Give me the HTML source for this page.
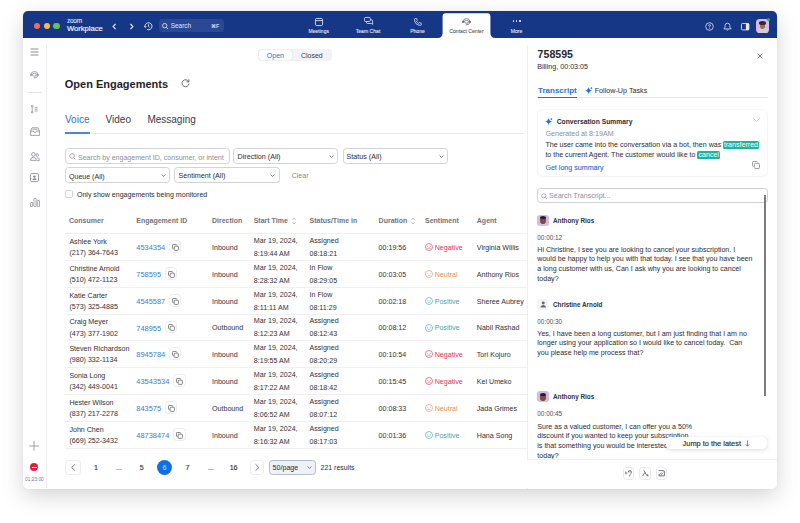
<!DOCTYPE html>
<html><head><meta charset="utf-8">
<style>
*{box-sizing:border-box;margin:0;padding:0}
html,body{width:800px;height:523px;overflow:hidden;background:#fff}
body{position:relative;font-family:"Liberation Sans",sans-serif;color:#242432}
.a{position:absolute}
.t{position:absolute;white-space:nowrap;line-height:1}
#win{position:absolute;left:23px;top:11.1px;width:754px;height:477.6px;border-radius:5px;background:#fff;box-shadow:0 7px 22px rgba(0,0,0,0.17),0 0 1.5px rgba(0,0,0,0.1);overflow:hidden}
#hdr{position:absolute;left:0;top:0;width:754px;height:26.9px;background:#163686}
.nav{position:absolute;color:#e6ebf7;font-size:5.1px;-webkit-text-stroke:0.08px currentColor;text-align:center;line-height:1}
svg{position:absolute;overflow:visible}
.th{font-size:7px;font-weight:700;color:#72727a}
.td{font-size:7.1px;color:#303038}
.id{color:#3b7de0;font-size:7.45px}
.cp{display:inline-block;position:relative;width:12px;height:0;margin-left:3.8px}
.cpb{position:absolute;left:-0.2px;top:-10.1px;width:12.5px;height:12.4px;border:0.8px solid #ececf0;border-radius:3.5px}
.box{position:absolute;border:0.8px solid #d3d3d9;border-radius:3.5px;background:#fff}
.chev{position:absolute}
.pg{font-size:7.1px;color:#2b2b35;text-align:center;-webkit-text-stroke:0.12px #2b2b35}
.msg{font-size:7.1px;color:#2b2b35}
.nm{font-size:6.35px;font-weight:700;color:#30303a}
.tm{font-size:6.4px;color:#4c4c56}


</style></head><body>
<div id="win">
  <div id="hdr"></div>
</div>

<!-- traffic lights -->
<div class="a" style="left:34px;top:23px;width:6.4px;height:6.4px;border-radius:50%;background:#ee6a5e"></div>
<div class="a" style="left:43.8px;top:23px;width:6.4px;height:6.4px;border-radius:50%;background:#f5bd4f"></div>
<div class="a" style="left:53.4px;top:23px;width:6.4px;height:6.4px;border-radius:50%;background:#61c454"></div>

<!-- logo -->
<div class="t" style="left:66.9px;top:17.9px;font-size:6.6px;letter-spacing:-0.25px;color:#dfe5f5;-webkit-text-stroke:0.1px #dfe5f5">zoom</div>
<div class="t" style="left:66.9px;top:24.8px;font-size:7.65px;color:#eef1fa;-webkit-text-stroke:0.18px #eef1fa">Workplace</div>
<!-- back / forward -->
<svg style="left:111.8px;top:22.8px" width="5" height="7" viewBox="0 0 5 7"><path d="M3.6 0.9 L1.1 3.5 L3.6 6.1" fill="none" stroke="#e6ebf7" stroke-width="1.1"/></svg>
<svg style="left:128.6px;top:22.8px" width="5" height="7" viewBox="0 0 5 7"><path d="M1.4 0.9 L3.9 3.5 L1.4 6.1" fill="none" stroke="#e6ebf7" stroke-width="1.1"/></svg>
<!-- history -->
<svg style="left:143.7px;top:21.9px" width="9" height="8.5" viewBox="0 0 9 8.5"><path d="M1.12 5.16 A3.5 3.5 0 1 1 3.02 7.42" fill="none" stroke="#e6ebf7" stroke-width="0.9"/><path d="M0.3 3.9 L1.1 5.3 L2.5 4.7" fill="none" stroke="#e6ebf7" stroke-width="0.8"/><path d="M4.5 2.3 V4.5 L5.6 5.3" fill="none" stroke="#e6ebf7" stroke-width="0.85"/></svg>
<!-- search -->
<div class="a" style="left:159px;top:19px;width:65.3px;height:13.2px;border-radius:3.5px;background:#2b4894"></div>
<svg style="left:161.8px;top:22.9px" width="6.5" height="6.5" viewBox="0 0 6.5 6.5"><circle cx="2.7" cy="2.7" r="2.2" fill="none" stroke="#e0e6f5" stroke-width="0.85"/><path d="M4.3 4.3 L6 6" stroke="#e0e6f5" stroke-width="0.85"/></svg>
<div class="t" style="left:170.8px;top:23.1px;font-size:6.4px;color:#e0e6f5">Search</div>
<div class="t" style="left:211px;top:23.8px;font-size:5.4px;font-weight:700;color:#c9d2ea">&#8984;F</div>

<!-- nav -->
<svg style="left:315px;top:18px" width="8" height="8" viewBox="0 0 8 8"><rect x="0.45" y="0.45" width="7.1" height="7.1" rx="1.3" fill="none" stroke="#e6ebf7" stroke-width="0.85"/><path d="M0.5 2.6 H7.5" stroke="#e6ebf7" stroke-width="0.85"/></svg>
<div class="nav" style="left:298.75px;top:29.2px;width:40px">Meetings</div>
<svg style="left:363.5px;top:17px" width="9.5" height="8" viewBox="0 0 9.5 8"><path d="M1.5 0.45 H5.1 Q6.4 0.45 6.4 1.7 V3.3 Q6.4 4.5 5.1 4.5 H1.5 Q0.45 4.5 0.45 3.3 V1.7 Q0.45 0.45 1.5 0.45Z" fill="none" stroke="#e6ebf7" stroke-width="0.8"/><path d="M6.4 2.8 H7.4 Q8.6 2.8 8.6 4 V7.4 L7.3 6.5 H3.6 Q2.4 6.5 2.4 5.3 V4.5" fill="none" stroke="#e6ebf7" stroke-width="0.8"/></svg>
<div class="nav" style="left:348px;top:29.2px;width:40px">Team Chat</div>
<svg style="left:413.7px;top:17.6px" width="8" height="8" viewBox="0 0 8 8"><path d="M1.2 0.6 L2.6 0.6 L3.4 2.4 L2.5 3.2 Q3.2 4.7 4.7 5.4 L5.5 4.5 L7.3 5.3 L7.3 6.7 Q7.3 7.4 6.5 7.4 Q0.6 7 0.5 1.3 Q0.5 0.6 1.2 0.6Z" fill="none" stroke="#e6ebf7" stroke-width="0.8"/></svg>
<div class="nav" style="left:397.5px;top:29.2px;width:40px">Phone</div>
<!-- contact center tab -->
<svg style="left:437px;top:13.4px" width="60" height="24.8" viewBox="0 0 60 24.5"><path d="M0.5 24.8 Q5.6 24.8 5.6 19.8 V3 Q5.6 0 8.6 0 H50.4 Q53.4 0 53.4 3 V19.8 Q53.4 24.8 58.5 24.8 Z" fill="#fff"/></svg>
<svg style="left:462.2px;top:17.5px" width="9" height="7.4" viewBox="0 0 9 7.4"><path d="M1.3 3.6 Q1.3 0.5 4.5 0.5 Q7.7 0.5 7.7 3.6" fill="none" stroke="#5a5a62" stroke-width="0.7"/><rect x="0.3" y="2.7" width="1.5" height="2.4" rx="0.7" fill="#5a5a62"/><rect x="7.2" y="2.7" width="1.5" height="2.4" rx="0.7" fill="#5a5a62"/><ellipse cx="4.5" cy="3.8" rx="2.1" ry="1.45" fill="none" stroke="#5a5a62" stroke-width="0.7"/><path d="M7.6 4.9 Q7.2 6.8 4.6 6.8" fill="none" stroke="#5a5a62" stroke-width="0.7"/><circle cx="4.4" cy="6.8" r="0.55" fill="#5a5a62"/></svg>
<div class="nav" style="left:446.5px;top:29.2px;width:40px;color:#555">Contact Center</div>
<div class="a" style="left:512.6px;top:20.4px;width:1.3px;height:1.3px;border-radius:50%;background:#e6ebf7"></div>
<div class="a" style="left:516px;top:20.4px;width:1.3px;height:1.3px;border-radius:50%;background:#e6ebf7"></div>
<div class="a" style="left:519.4px;top:20.4px;width:1.3px;height:1.3px;border-radius:50%;background:#e6ebf7"></div>
<div class="nav" style="left:496.6px;top:29.2px;width:40px">More</div>

<!-- right icons -->
<svg style="left:704.5px;top:21.6px" width="9" height="9" viewBox="0 0 9 9"><circle cx="4.5" cy="4.5" r="3.8" fill="none" stroke="#e6ebf7" stroke-width="0.75"/><path d="M3.5 3.7 Q3.5 2.7 4.5 2.7 Q5.5 2.7 5.5 3.6 Q5.5 4.2 4.6 4.6 V5.2" fill="none" stroke="#e6ebf7" stroke-width="0.8"/><circle cx="4.6" cy="6.3" r="0.5" fill="#e6ebf7"/></svg>
<svg style="left:722.6px;top:21.6px" width="9" height="9" viewBox="0 0 9 9"><path d="M0.8 6.9 Q2.1 6 2.1 4.6 V3.6 A2.4 2.4 0 0 1 6.9 3.6 V4.6 Q6.9 6 8.2 6.9 Z" fill="none" stroke="#e6ebf7" stroke-width="0.8" stroke-linejoin="round"/><path d="M3.6 7.7 Q4.5 8.6 5.4 7.7" fill="none" stroke="#e6ebf7" stroke-width="0.75"/></svg>
<svg style="left:741px;top:22.6px" width="8.4" height="7.4" viewBox="0 0 8.4 7.4"><rect x="0.45" y="0.45" width="7.5" height="6.5" rx="1.1" fill="none" stroke="#e6ebf7" stroke-width="0.9"/><rect x="4.9" y="0.45" width="3.05" height="6.5" fill="#e6ebf7"/></svg>
<div class="a" style="left:755.8px;top:19.3px;width:13.6px;height:13.5px;border-radius:3.5px;background:#d9b8ef;overflow:hidden">
<div class="a" style="left:2.6px;top:9.2px;width:9.5px;height:7px;border-radius:45%;background:#d4cdd8"></div>
<div class="a" style="left:4.2px;top:3.6px;width:5.4px;height:6.6px;border-radius:45%;background:#9c6a52"></div>
<div class="a" style="left:3.4px;top:2.2px;width:6.6px;height:3.8px;border-radius:50% 50% 30% 30%;background:#3a2620"></div>
</div>
<div class="a" style="left:766.7px;top:17.5px;width:3.8px;height:3.8px;border-radius:50%;background:#22b35a"></div>
<!-- sidebar -->
<div class="a" style="left:46px;top:44.4px;width:1px;height:444px;background:#efeff2"></div>
<svg style="left:30px;top:47.5px" width="9" height="8" viewBox="0 0 9 8"><path d="M0.5 1 H8.5 M0.5 4 H8.5 M0.5 7 H8.5" stroke="#84848c" stroke-width="0.9"/></svg>
<svg style="left:29.9px;top:70.8px" width="9" height="7.4" viewBox="0 0 9 7.4"><path d="M1.3 3.6 Q1.3 0.5 4.5 0.5 Q7.7 0.5 7.7 3.6" fill="none" stroke="#8c8c94" stroke-width="0.8"/><rect x="0.3" y="2.7" width="1.5" height="2.4" rx="0.7" fill="#8c8c94"/><rect x="7.2" y="2.7" width="1.5" height="2.4" rx="0.7" fill="#8c8c94"/><ellipse cx="4.5" cy="3.8" rx="2.1" ry="1.45" fill="none" stroke="#8c8c94" stroke-width="0.8"/><path d="M7.6 4.9 Q7.2 6.8 4.6 6.8" fill="none" stroke="#8c8c94" stroke-width="0.8"/><circle cx="4.4" cy="6.8" r="0.55" fill="#8c8c94"/></svg>
<div class="a" style="left:27px;top:91.5px;width:15px;height:1px;background:#e6e6ea"></div>
<svg style="left:30px;top:104.8px" width="9" height="8.5" viewBox="0 0 9 8.5"><circle cx="2.2" cy="1.2" r="0.85" fill="none" stroke="#84848c" stroke-width="0.75"/><circle cx="2.2" cy="7.2" r="0.85" fill="none" stroke="#84848c" stroke-width="0.75"/><path d="M2.2 2 V6.4 M4.6 2.4 H7.6 M4.6 4.2 H7.6 M4.6 6 H7.6" fill="none" stroke="#84848c" stroke-width="0.7"/></svg>
<svg style="left:29.5px;top:127px" width="10" height="9" viewBox="0 0 10 9"><path d="M0.6 4 H3.3 Q3.6 5.4 5 5.4 Q6.4 5.4 6.7 4 H9.4 V8.4 H0.6Z" fill="none" stroke="#84848c" stroke-width="0.75"/><path d="M0.6 4 L2 0.8 H8 L9.4 4" fill="none" stroke="#84848c" stroke-width="0.75"/><path d="M2.6 2.3 H7.4" stroke="#84848c" stroke-width="0.7"/></svg>
<svg style="left:29.5px;top:151.5px" width="10" height="9" viewBox="0 0 10 9"><circle cx="3.4" cy="2.4" r="1.8" fill="none" stroke="#84848c" stroke-width="0.75"/><path d="M0.5 8.4 Q0.5 5.2 3.4 5.2 Q6.3 5.2 6.3 8.4Z" fill="none" stroke="#84848c" stroke-width="0.75"/><circle cx="7.2" cy="3" r="1.3" fill="none" stroke="#84848c" stroke-width="0.7"/><path d="M7 5.6 Q9.5 5.6 9.5 8.4 H7" fill="none" stroke="#84848c" stroke-width="0.7"/></svg>
<svg style="left:30px;top:173px" width="9" height="9" viewBox="0 0 9 9"><rect x="0.5" y="0.5" width="8" height="8" rx="1.2" fill="none" stroke="#84848c" stroke-width="0.8"/><circle cx="4.5" cy="3.6" r="1.2" fill="#84848c"/><path d="M2.4 7 Q2.4 5.3 4.5 5.3 Q6.6 5.3 6.6 7Z" fill="#84848c"/></svg>
<svg style="left:29.5px;top:197.5px" width="10" height="9" viewBox="0 0 10 9"><rect x="0.5" y="4.5" width="2.2" height="4" rx="0.5" fill="none" stroke="#84848c" stroke-width="0.7"/><rect x="3.9" y="0.5" width="2.2" height="8" rx="0.5" fill="none" stroke="#84848c" stroke-width="0.7"/><rect x="7.3" y="2.5" width="2.2" height="6" rx="0.5" fill="none" stroke="#84848c" stroke-width="0.7"/></svg>
<svg style="left:29.4px;top:441.3px" width="10" height="10" viewBox="0 0 10 10"><path d="M5 0.2 V9.8 M0.2 5 H9.8" stroke="#77777f" stroke-width="0.65"/></svg>
<div class="a" style="left:30.4px;top:463px;width:8px;height:8px;border-radius:50%;background:#e0203a"></div>
<div class="a" style="left:32.2px;top:466.5px;width:4.4px;height:1.1px;background:#fff"></div>
<div class="t" style="left:25.1px;top:477.7px;font-size:4.8px;color:#7a7a84">01:23:00</div>

<!-- segmented -->
<div class="a" style="left:258px;top:49.3px;width:73.5px;height:11.8px;border-radius:3px;background:#f2f3f6"></div>
<div class="a" style="left:258.6px;top:49.9px;width:33.6px;height:10.6px;border-radius:2.5px;background:#fff;box-shadow:0 0 1px rgba(0,0,0,0.2)"></div>
<div class="t" style="left:258.6px;width:33.6px;text-align:center;top:51.9px;font-size:7px;color:#2f6fd6">Open</div>
<div class="t" style="left:292.2px;width:39.3px;text-align:center;top:51.9px;font-size:7px;color:#3a3a44">Closed</div>

<!-- title -->
<div class="t" style="left:64.8px;top:78.6px;font-size:11px;font-weight:700;color:#1e1e28">Open Engagements</div>
<svg style="left:181.2px;top:79.3px" width="9" height="8.5" viewBox="0 0 9 8.5"><path d="M7.6 2.6 A3.5 3.5 0 1 0 8 4.6" fill="none" stroke="#555" stroke-width="0.85"/><path d="M7.9 0.4 V2.9 H5.4" fill="none" stroke="#555" stroke-width="0.85"/></svg>

<!-- tabs -->
<div class="t" style="left:65px;top:115.3px;font-size:10px;color:#2f6fd6">Voice</div>
<div class="t" style="left:105.6px;top:115.3px;font-size:10px;color:#3a3a44">Video</div>
<div class="t" style="left:147.4px;top:115.3px;font-size:10px;color:#3a3a44">Messaging</div>
<div class="a" style="left:65px;top:132.9px;width:458.5px;height:0.9px;background:#e8e8ec"></div>
<div class="a" style="left:65px;top:132px;width:25px;height:1.9px;background:#4a86de"></div>

<!-- filters -->
<div class="box" style="left:65.2px;top:148.2px;width:164.8px;height:15.4px"></div>
<svg style="left:69.2px;top:153px" width="7" height="7" viewBox="0 0 7 7"><circle cx="3" cy="3" r="2.3" fill="none" stroke="#8a8a92" stroke-width="0.7"/><path d="M4.7 4.7 L6.4 6.4" stroke="#8a8a92" stroke-width="0.7"/></svg>
<div class="t" style="left:78px;top:153.5px;font-size:7.05px;color:#8e8e96">Search by engagement ID, consumer, or intent</div>
<div class="box" style="left:233.4px;top:148.2px;width:105.1px;height:15.4px"></div>
<div class="t" style="left:237.6px;top:153.5px;font-size:7.15px;color:#2b2b35">Direction (All)</div>
<svg style="left:329.1px;top:154.7px" width="5" height="3" viewBox="0 0 5 3"><path d="M0.6 0.6 L2.5 2.4 L4.4 0.6" fill="none" stroke="#555" stroke-width="0.75"/></svg>
<div class="box" style="left:342.7px;top:148.2px;width:105.3px;height:15.4px"></div>
<div class="t" style="left:346.6px;top:153.5px;font-size:7.15px;color:#2b2b35">Status (All)</div>
<svg style="left:438.5px;top:154.7px" width="5" height="3" viewBox="0 0 5 3"><path d="M0.6 0.6 L2.5 2.4 L4.4 0.6" fill="none" stroke="#555" stroke-width="0.75"/></svg>
<div class="box" style="left:65.2px;top:167.3px;width:105.3px;height:15.3px"></div>
<div class="t" style="left:69px;top:172.6px;font-size:7.05px;color:#2b2b35">Queue (All)</div>
<svg style="left:160.5px;top:173.7px" width="5" height="3" viewBox="0 0 5 3"><path d="M0.6 0.6 L2.5 2.4 L4.4 0.6" fill="none" stroke="#555" stroke-width="0.75"/></svg>
<div class="box" style="left:174.3px;top:167.3px;width:105.3px;height:15.3px"></div>
<div class="t" style="left:178.6px;top:172.6px;font-size:7.15px;color:#2b2b35">Sentiment (All)</div>
<svg style="left:270.0px;top:173.7px" width="5" height="3" viewBox="0 0 5 3"><path d="M0.6 0.6 L2.5 2.4 L4.4 0.6" fill="none" stroke="#555" stroke-width="0.75"/></svg>
<div class="t" style="left:291.7px;top:171.9px;font-size:7.05px;color:#8a8a92">Clear</div>
<div class="box" style="left:65.2px;top:190.4px;width:7.4px;height:7.5px;border-radius:1.8px"></div>
<div class="t" style="left:76.9px;top:191px;font-size:7.07px;color:#2b2b35">Only show engagements being monitored</div>

<!-- table -->
<div class="t th" style="left:69px;top:217.09px">Consumer</div>
<div class="t th" style="left:136.3px;top:217.09px">Engagement ID</div>
<div class="t th" style="left:212px;top:217.09px">Direction</div>
<div class="t th" style="left:253.7px;top:217.09px">Start Time</div>
<div class="t th" style="left:309.5px;top:217.09px">Status/Time in</div>
<div class="t th" style="left:378.6px;top:217.09px">Duration</div>
<div class="t th" style="left:425px;top:217.09px">Sentiment</div>
<div class="t th" style="left:476.8px;top:217.09px">Agent</div>
<svg style="left:292px;top:216.5px" width="4" height="8" viewBox="0 0 4 8"><path d="M0.7 2.6 L2 1.2 L3.3 2.6 M0.7 5.4 L2 6.8 L3.3 5.4" fill="none" stroke="#8a8a92" stroke-width="0.7"/></svg>
<svg style="left:411px;top:216.5px" width="4" height="8" viewBox="0 0 4 8"><path d="M0.7 2.6 L2 1.2 L3.3 2.6 M0.7 5.4 L2 6.8 L3.3 5.4" fill="none" stroke="#8a8a92" stroke-width="0.7"/></svg>
<div class="a" style="left:65px;top:233.0px;width:462px;height:1px;background:#f0f0f3"></div>
<div class="a" style="left:65px;top:260.0px;width:462px;height:1px;background:#f0f0f3"></div>
<div class="a" style="left:65px;top:287.0px;width:462px;height:1px;background:#f0f0f3"></div>
<div class="a" style="left:65px;top:313.5px;width:462px;height:1px;background:#f0f0f3"></div>
<div class="a" style="left:65px;top:340.0px;width:462px;height:1px;background:#f0f0f3"></div>
<div class="a" style="left:65px;top:367.0px;width:462px;height:1px;background:#f0f0f3"></div>
<div class="a" style="left:65px;top:394.0px;width:462px;height:1px;background:#f0f0f3"></div>
<div class="a" style="left:65px;top:421.0px;width:462px;height:1px;background:#f0f0f3"></div>
<div class="a" style="left:65px;top:447.5px;width:462px;height:1px;background:#f0f0f3"></div>
<div class="t td" style="left:69.4px;top:238.89px">Ashlee York</div>
<div class="t td" style="left:69.4px;top:250.09px">(217) 364-7643</div>
<div class="t td id" style="left:136.3px;top:244.49px">4534354<span class="cp"><span class="cpb"></span><svg style="left:2.6px;top:-6.6px" width="7" height="7" viewBox="0 0 7 7"><rect x="2.2" y="2.2" width="4.2" height="4.2" rx="0.8" fill="#fff" stroke="#555" stroke-width="0.7"/><path d="M4.6 1.4 V1.2 Q4.6 0.5 3.9 0.5 H1.2 Q0.5 0.5 0.5 1.2 V3.9 Q0.5 4.6 1.2 4.6 H1.6" fill="none" stroke="#555" stroke-width="0.7"/></svg></span></div>
<div class="t td" style="left:212px;top:244.79px">Inbound</div>
<div class="t td" style="left:253.8px;top:237.79px">Mar 19, 2024,</div>
<div class="t td" style="left:253.8px;top:250.79px">8:19:44 AM</div>
<div class="t td" style="left:309.5px;top:237.79px">Assigned</div>
<div class="t td" style="left:309.5px;top:250.79px">08:18:21</div>
<div class="t td" style="left:378.6px;top:244.79px">00:19:56</div>
<svg style="left:425px;top:243.35px" width="8" height="8" viewBox="0 0 8 8"><circle cx="4" cy="4" r="3.5" fill="none" stroke="#d83a55" stroke-width="0.65"/><circle cx="2.8" cy="3.2" r="0.48" fill="#d83a55"/><circle cx="5.2" cy="3.2" r="0.48" fill="#d83a55"/><path d="M2.4 5.6 Q4 4.3 5.6 5.6" fill="none" stroke="#d83a55" stroke-width="0.6"/></svg>
<div class="t td" style="left:434.7px;top:244.79px;color:#d83a55">Negative</div>
<div class="t td" style="left:476.8px;top:244.79px">Virginia Willis</div>
<div class="t td" style="left:69.4px;top:265.89px">Christine Arnold</div>
<div class="t td" style="left:69.4px;top:277.09px">(510) 472-1123</div>
<div class="t td id" style="left:136.3px;top:271.49px">758595<span class="cp"><span class="cpb"></span><svg style="left:2.6px;top:-6.6px" width="7" height="7" viewBox="0 0 7 7"><rect x="2.2" y="2.2" width="4.2" height="4.2" rx="0.8" fill="#fff" stroke="#555" stroke-width="0.7"/><path d="M4.6 1.4 V1.2 Q4.6 0.5 3.9 0.5 H1.2 Q0.5 0.5 0.5 1.2 V3.9 Q0.5 4.6 1.2 4.6 H1.6" fill="none" stroke="#555" stroke-width="0.7"/></svg></span></div>
<div class="t td" style="left:212px;top:271.79px">Inbound</div>
<div class="t td" style="left:253.8px;top:264.79px">Mar 19, 2024,</div>
<div class="t td" style="left:253.8px;top:277.79px">8:28:32 AM</div>
<div class="t td" style="left:309.5px;top:264.79px">In Flow</div>
<div class="t td" style="left:309.5px;top:277.79px">08:29:05</div>
<div class="t td" style="left:378.6px;top:271.79px">00:03:05</div>
<svg style="left:425px;top:270.35px" width="8" height="8" viewBox="0 0 8 8"><circle cx="4" cy="4" r="3.5" fill="none" stroke="#dc9262" stroke-width="0.65"/><circle cx="2.8" cy="3.2" r="0.48" fill="#dc9262"/><circle cx="5.2" cy="3.2" r="0.48" fill="#dc9262"/><path d="M2.6 5.5 Q4 4.9 5.4 5.5" fill="none" stroke="#dc9262" stroke-width="0.6"/></svg>
<div class="t td" style="left:434.7px;top:271.79px;color:#dc9262">Neutral</div>
<div class="t td" style="left:476.8px;top:271.79px">Anthony Rios</div>
<div class="t td" style="left:69.4px;top:292.89px">Katie Carter</div>
<div class="t td" style="left:69.4px;top:304.09px">(573) 325-4885</div>
<div class="t td id" style="left:136.3px;top:298.49px">4545587<span class="cp"><span class="cpb"></span><svg style="left:2.6px;top:-6.6px" width="7" height="7" viewBox="0 0 7 7"><rect x="2.2" y="2.2" width="4.2" height="4.2" rx="0.8" fill="#fff" stroke="#555" stroke-width="0.7"/><path d="M4.6 1.4 V1.2 Q4.6 0.5 3.9 0.5 H1.2 Q0.5 0.5 0.5 1.2 V3.9 Q0.5 4.6 1.2 4.6 H1.6" fill="none" stroke="#555" stroke-width="0.7"/></svg></span></div>
<div class="t td" style="left:212px;top:298.79px">Inbound</div>
<div class="t td" style="left:253.8px;top:291.79px">Mar 19, 2024,</div>
<div class="t td" style="left:253.8px;top:304.79px">8:11:11 AM</div>
<div class="t td" style="left:309.5px;top:291.79px">In Flow</div>
<div class="t td" style="left:309.5px;top:304.79px">08:11:29</div>
<div class="t td" style="left:378.6px;top:298.79px">00:02:18</div>
<svg style="left:425px;top:297.35px" width="8" height="8" viewBox="0 0 8 8"><circle cx="4" cy="4" r="3.5" fill="none" stroke="#44a8a8" stroke-width="0.65"/><circle cx="2.8" cy="3.2" r="0.48" fill="#44a8a8"/><circle cx="5.2" cy="3.2" r="0.48" fill="#44a8a8"/><path d="M2.4 4.8 Q4 6.1 5.6 4.8" fill="none" stroke="#44a8a8" stroke-width="0.6"/></svg>
<div class="t td" style="left:434.7px;top:298.79px;color:#44a8a8">Positive</div>
<div class="t td" style="left:476.8px;top:298.79px">Sheree Aubrey</div>
<div class="t td" style="left:69.4px;top:319.39px">Craig Meyer</div>
<div class="t td" style="left:69.4px;top:330.59px">(473) 377-1902</div>
<div class="t td id" style="left:136.3px;top:324.99px">748955<span class="cp"><span class="cpb"></span><svg style="left:2.6px;top:-6.6px" width="7" height="7" viewBox="0 0 7 7"><rect x="2.2" y="2.2" width="4.2" height="4.2" rx="0.8" fill="#fff" stroke="#555" stroke-width="0.7"/><path d="M4.6 1.4 V1.2 Q4.6 0.5 3.9 0.5 H1.2 Q0.5 0.5 0.5 1.2 V3.9 Q0.5 4.6 1.2 4.6 H1.6" fill="none" stroke="#555" stroke-width="0.7"/></svg></span></div>
<div class="t td" style="left:212px;top:325.29px">Outbound</div>
<div class="t td" style="left:253.8px;top:318.29px">Mar 19, 2024,</div>
<div class="t td" style="left:253.8px;top:331.29px">8:12:23 AM</div>
<div class="t td" style="left:309.5px;top:318.29px">Assigned</div>
<div class="t td" style="left:309.5px;top:331.29px">08:12:43</div>
<div class="t td" style="left:378.6px;top:325.29px">00:08:12</div>
<svg style="left:425px;top:323.85px" width="8" height="8" viewBox="0 0 8 8"><circle cx="4" cy="4" r="3.5" fill="none" stroke="#44a8a8" stroke-width="0.65"/><circle cx="2.8" cy="3.2" r="0.48" fill="#44a8a8"/><circle cx="5.2" cy="3.2" r="0.48" fill="#44a8a8"/><path d="M2.4 4.8 Q4 6.1 5.6 4.8" fill="none" stroke="#44a8a8" stroke-width="0.6"/></svg>
<div class="t td" style="left:434.7px;top:325.29px;color:#44a8a8">Positive</div>
<div class="t td" style="left:476.8px;top:325.29px">Nabil Rashad</div>
<div class="t td" style="left:69.4px;top:345.89px">Steven Richardson</div>
<div class="t td" style="left:69.4px;top:357.09px">(980) 332-1134</div>
<div class="t td id" style="left:136.3px;top:351.49px">8945784<span class="cp"><span class="cpb"></span><svg style="left:2.6px;top:-6.6px" width="7" height="7" viewBox="0 0 7 7"><rect x="2.2" y="2.2" width="4.2" height="4.2" rx="0.8" fill="#fff" stroke="#555" stroke-width="0.7"/><path d="M4.6 1.4 V1.2 Q4.6 0.5 3.9 0.5 H1.2 Q0.5 0.5 0.5 1.2 V3.9 Q0.5 4.6 1.2 4.6 H1.6" fill="none" stroke="#555" stroke-width="0.7"/></svg></span></div>
<div class="t td" style="left:212px;top:351.79px">Inbound</div>
<div class="t td" style="left:253.8px;top:344.79px">Mar 19, 2024,</div>
<div class="t td" style="left:253.8px;top:357.79px">8:19:55 AM</div>
<div class="t td" style="left:309.5px;top:344.79px">Assigned</div>
<div class="t td" style="left:309.5px;top:357.79px">08:20:29</div>
<div class="t td" style="left:378.6px;top:351.79px">00:10:54</div>
<svg style="left:425px;top:350.35px" width="8" height="8" viewBox="0 0 8 8"><circle cx="4" cy="4" r="3.5" fill="none" stroke="#d83a55" stroke-width="0.65"/><circle cx="2.8" cy="3.2" r="0.48" fill="#d83a55"/><circle cx="5.2" cy="3.2" r="0.48" fill="#d83a55"/><path d="M2.4 5.6 Q4 4.3 5.6 5.6" fill="none" stroke="#d83a55" stroke-width="0.6"/></svg>
<div class="t td" style="left:434.7px;top:351.79px;color:#d83a55">Negative</div>
<div class="t td" style="left:476.8px;top:351.79px">Tori Kojuro</div>
<div class="t td" style="left:69.4px;top:372.89px">Sonia Long</div>
<div class="t td" style="left:69.4px;top:384.09px">(342) 449-0041</div>
<div class="t td id" style="left:136.3px;top:378.49px">43543534<span class="cp"><span class="cpb"></span><svg style="left:2.6px;top:-6.6px" width="7" height="7" viewBox="0 0 7 7"><rect x="2.2" y="2.2" width="4.2" height="4.2" rx="0.8" fill="#fff" stroke="#555" stroke-width="0.7"/><path d="M4.6 1.4 V1.2 Q4.6 0.5 3.9 0.5 H1.2 Q0.5 0.5 0.5 1.2 V3.9 Q0.5 4.6 1.2 4.6 H1.6" fill="none" stroke="#555" stroke-width="0.7"/></svg></span></div>
<div class="t td" style="left:212px;top:378.79px">Inbound</div>
<div class="t td" style="left:253.8px;top:371.79px">Mar 19, 2024,</div>
<div class="t td" style="left:253.8px;top:384.79px">8:17:22 AM</div>
<div class="t td" style="left:309.5px;top:371.79px">Assigned</div>
<div class="t td" style="left:309.5px;top:384.79px">08:18:42</div>
<div class="t td" style="left:378.6px;top:378.79px">00:15:45</div>
<svg style="left:425px;top:377.35px" width="8" height="8" viewBox="0 0 8 8"><circle cx="4" cy="4" r="3.5" fill="none" stroke="#d83a55" stroke-width="0.65"/><circle cx="2.8" cy="3.2" r="0.48" fill="#d83a55"/><circle cx="5.2" cy="3.2" r="0.48" fill="#d83a55"/><path d="M2.4 5.6 Q4 4.3 5.6 5.6" fill="none" stroke="#d83a55" stroke-width="0.6"/></svg>
<div class="t td" style="left:434.7px;top:378.79px;color:#d83a55">Negative</div>
<div class="t td" style="left:476.8px;top:378.79px">Kei Umeko</div>
<div class="t td" style="left:69.4px;top:399.89px">Hester Wilson</div>
<div class="t td" style="left:69.4px;top:411.09px">(837) 217-2278</div>
<div class="t td id" style="left:136.3px;top:405.49px">843575<span class="cp"><span class="cpb"></span><svg style="left:2.6px;top:-6.6px" width="7" height="7" viewBox="0 0 7 7"><rect x="2.2" y="2.2" width="4.2" height="4.2" rx="0.8" fill="#fff" stroke="#555" stroke-width="0.7"/><path d="M4.6 1.4 V1.2 Q4.6 0.5 3.9 0.5 H1.2 Q0.5 0.5 0.5 1.2 V3.9 Q0.5 4.6 1.2 4.6 H1.6" fill="none" stroke="#555" stroke-width="0.7"/></svg></span></div>
<div class="t td" style="left:212px;top:405.79px">Outbound</div>
<div class="t td" style="left:253.8px;top:398.79px">Mar 19, 2024,</div>
<div class="t td" style="left:253.8px;top:411.79px">8:06:52 AM</div>
<div class="t td" style="left:309.5px;top:398.79px">Assigned</div>
<div class="t td" style="left:309.5px;top:411.79px">08:07:12</div>
<div class="t td" style="left:378.6px;top:405.79px">00:08:33</div>
<svg style="left:425px;top:404.35px" width="8" height="8" viewBox="0 0 8 8"><circle cx="4" cy="4" r="3.5" fill="none" stroke="#dc9262" stroke-width="0.65"/><circle cx="2.8" cy="3.2" r="0.48" fill="#dc9262"/><circle cx="5.2" cy="3.2" r="0.48" fill="#dc9262"/><path d="M2.6 5.5 Q4 4.9 5.4 5.5" fill="none" stroke="#dc9262" stroke-width="0.6"/></svg>
<div class="t td" style="left:434.7px;top:405.79px;color:#dc9262">Neutral</div>
<div class="t td" style="left:476.8px;top:405.79px">Jada Grimes</div>
<div class="t td" style="left:69.4px;top:426.89px">John Chen</div>
<div class="t td" style="left:69.4px;top:438.09px">(669) 252-3432</div>
<div class="t td id" style="left:136.3px;top:432.49px">48738474<span class="cp"><span class="cpb"></span><svg style="left:2.6px;top:-6.6px" width="7" height="7" viewBox="0 0 7 7"><rect x="2.2" y="2.2" width="4.2" height="4.2" rx="0.8" fill="#fff" stroke="#555" stroke-width="0.7"/><path d="M4.6 1.4 V1.2 Q4.6 0.5 3.9 0.5 H1.2 Q0.5 0.5 0.5 1.2 V3.9 Q0.5 4.6 1.2 4.6 H1.6" fill="none" stroke="#555" stroke-width="0.7"/></svg></span></div>
<div class="t td" style="left:212px;top:432.79px">Inbound</div>
<div class="t td" style="left:253.8px;top:425.79px">Mar 19, 2024,</div>
<div class="t td" style="left:253.8px;top:438.79px">8:16:32 AM</div>
<div class="t td" style="left:309.5px;top:425.79px">Assigned</div>
<div class="t td" style="left:309.5px;top:438.79px">08:17:03</div>
<div class="t td" style="left:378.6px;top:432.79px">00:01:36</div>
<svg style="left:425px;top:431.35px" width="8" height="8" viewBox="0 0 8 8"><circle cx="4" cy="4" r="3.5" fill="none" stroke="#44a8a8" stroke-width="0.65"/><circle cx="2.8" cy="3.2" r="0.48" fill="#44a8a8"/><circle cx="5.2" cy="3.2" r="0.48" fill="#44a8a8"/><path d="M2.4 4.8 Q4 6.1 5.6 4.8" fill="none" stroke="#44a8a8" stroke-width="0.6"/></svg>
<div class="t td" style="left:434.7px;top:432.79px;color:#44a8a8">Positive</div>
<div class="t td" style="left:476.8px;top:432.79px">Hana Song</div>
<!-- pagination -->
<div class="box" style="left:65.4px;top:460.2px;width:15.6px;height:14.8px;border-color:#ececf0"></div>
<svg style="left:70.6px;top:464.1px" width="4.5" height="7" viewBox="0 0 4.5 7"><path d="M3.9 0.4 L0.7 3.5 L3.9 6.6" fill="none" stroke="#5a5a62" stroke-width="0.8"/></svg>
<div class="t pg" style="left:86px;width:20px;top:465px">1</div>
<div class="t pg" style="left:109px;width:20px;top:465px">...</div>
<div class="t pg" style="left:131.7px;width:20px;top:465px">5</div>
<div class="a" style="left:156.7px;top:459.8px;width:15.6px;height:15.6px;border-radius:50%;background:#0f6fe6"></div>
<div class="t pg" style="left:154.5px;width:20px;top:465px;color:#fff">6</div>
<div class="t pg" style="left:177.6px;width:20px;top:465px">7</div>
<div class="t pg" style="left:201px;width:20px;top:465px">...</div>
<div class="t pg" style="left:223.6px;width:20px;top:465px">16</div>
<div class="box" style="left:249.6px;top:460.4px;width:14.6px;height:14.4px;border-color:#ececf0"></div>
<svg style="left:254.6px;top:464.1px" width="4.5" height="7" viewBox="0 0 4.5 7"><path d="M0.6 0.4 L3.8 3.5 L0.6 6.6" fill="none" stroke="#5a5a62" stroke-width="0.8"/></svg>
<div class="box" style="left:268.6px;top:460.2px;width:47.4px;height:14.6px;background:#eef1f6;border-color:#b9bcc6"></div>
<div class="t" style="left:272.6px;top:465px;font-size:7.1px;color:#2b2b35">50/page</div>
<svg style="left:306.5px;top:466px" width="5" height="3" viewBox="0 0 5 3"><path d="M0.6 0.6 L2.5 2.4 L4.4 0.6" fill="none" stroke="#555" stroke-width="0.75"/></svg>
<div class="t" style="left:320.6px;top:465px;font-size:6.95px;color:#2b2b35">221 results</div>

<!-- right panel -->
<div class="a" style="left:526.5px;top:44.5px;width:1px;height:444px;background:#efeff2"></div>
<div class="t" style="left:537.6px;top:48.6px;font-size:10.6px;font-weight:700;color:#26262e">758595</div>
<svg style="left:756.8px;top:52.5px" width="6" height="6" viewBox="0 0 6 6"><path d="M0.5 0.5 L5.5 5.5 M5.5 0.5 L0.5 5.5" stroke="#666" stroke-width="0.75"/></svg>
<div class="t" style="left:537.2px;top:63.8px;font-size:7.15px;color:#2b2b35">Billing, 00:03:05</div>
<div class="t" style="left:538px;top:86.8px;font-size:8px;font-weight:700;color:#2f6fd6">Transcript</div>
<div class="a" style="left:537px;top:96.9px;width:230.6px;height:0.8px;background:#e4e4e8"></div>
<div class="a" style="left:538px;top:96.5px;width:39px;height:1.4px;background:#2f6ad0"></div>
<svg style="left:585px;top:86.6px" width="8.5" height="7.5" viewBox="0 0 8.5 7.5"><path d="M3.6 0 Q4.1 3 7.2 3.6 Q4.1 4.2 3.6 7.2 Q3.1 4.2 0 3.6 Q3.1 3 3.6 0Z" fill="#1f6fe0"/><circle cx="6.4" cy="1.1" r="0.85" fill="#1f6fe0"/></svg>
<div class="t" style="left:594.7px;top:86.6px;font-size:7.2px;color:#2b2b35">Follow-Up Tasks</div>

<!-- summary card -->
<div class="a" style="left:537.8px;top:110.2px;width:229.2px;height:66px;border-radius:5px;background:#fff;box-shadow:0 0 0 0.6px #f0f0f3,0 1px 3px rgba(0,0,0,0.04)"></div>
<svg style="left:544.6px;top:118.4px" width="8.5" height="7.5" viewBox="0 0 8.5 7.5"><path d="M3.6 0 Q4.1 3 7.2 3.6 Q4.1 4.2 3.6 7.2 Q3.1 4.2 0 3.6 Q3.1 3 3.6 0Z" fill="#1f6fe0"/><circle cx="6.4" cy="1.1" r="0.85" fill="#1f6fe0"/></svg>
<div class="t" style="left:556.7px;top:119.3px;font-size:6.75px;font-weight:700;color:#2b2b35">Conversation Summary</div>
<svg style="left:753.1px;top:118.1px" width="7" height="4" viewBox="0 0 7 4"><path d="M0.4 0.4 L3.5 3.5 L6.6 0.4" fill="none" stroke="#b4b4bc" stroke-width="0.7"/></svg>
<div class="t" style="left:545.4px;top:130.6px;font-size:7.15px;color:#8e8e96">Generated at 8:19AM</div>
<div class="t msg" style="left:545.4px;top:141.9px">The user came into the conversation via a bot, then was <span style="background:#1fb39a;color:#fff;border-radius:1.5px;padding:0 1px 0 0.5px">transferred</span></div>
<div class="t msg" style="left:545.4px;top:151.9px">to the current Agent. The customer would like to <span style="background:#1fb39a;color:#fff;border-radius:1.5px;padding:0 1.2px 0 1px">cancel</span></div>
<div class="t" style="left:545.4px;top:165px;font-size:7.12px;color:#2f6fd6;-webkit-text-stroke:0.12px #2f6fd6">Get long summary</div>
<svg style="left:752px;top:160.6px" width="8" height="8" viewBox="0 0 8 8"><rect x="2.4" y="2.4" width="5.1" height="5.1" rx="0.9" fill="#fff" stroke="#777" stroke-width="0.7"/><path d="M5.4 1.6 V1.3 Q5.4 0.5 4.6 0.5 H1.3 Q0.5 0.5 0.5 1.3 V4.6 Q0.5 5.4 1.3 5.4 H1.7" fill="none" stroke="#777" stroke-width="0.7"/></svg>

<!-- search transcript -->
<div class="box" style="left:537.3px;top:188px;width:230.3px;height:14.8px;border-color:#d0d0d6"></div>
<svg style="left:540.8px;top:192.7px" width="6.5" height="6.5" viewBox="0 0 7 7"><circle cx="3" cy="3" r="2.3" fill="none" stroke="#8a8a92" stroke-width="0.7"/><path d="M4.7 4.7 L6.4 6.4" stroke="#8a8a92" stroke-width="0.7"/></svg>
<div class="t" style="left:549px;top:193.1px;font-size:7.1px;color:#8e8e96">Search Transcript...</div>
<div class="a" style="left:764.1px;top:194.9px;width:1.8px;height:201px;background:#7c7c80"></div>

<!-- msg1 -->
<div class="a" style="left:537.3px;top:214.7px;width:11.6px;height:11px;border-radius:3px;background:#d6b8ee;overflow:hidden"><div class="a" style="left:1.6px;top:8.2px;width:8.6px;height:5px;border-radius:50%;background:#d0c8d6"></div><div class="a" style="left:3.2px;top:2.4px;width:5.6px;height:7px;border-radius:45%;background:#7a5040"></div><div class="a" style="left:2.8px;top:1.4px;width:6px;height:3.4px;border-radius:50% 50% 30% 30%;background:#2e1e1a"></div></div>
<div class="t nm" style="left:553px;top:217.8px">Anthony Rios</div>
<div class="t tm" style="left:537.3px;top:235px">00:00:12</div>
<div class="t msg" style="left:537.3px;top:246.54px;">Hi Christine, I see you are looking to cancel your subscription. I</div>
<div class="t msg" style="left:537.3px;top:256.24px;">would be happy to help you with that today. I see that you have been</div>
<div class="t msg" style="left:537.3px;top:265.94px;">a long customer with us, Can I ask why you are looking to cancel</div>
<div class="t msg" style="left:537.3px;top:275.54px;">today?</div>

<!-- msg2 -->
<div class="a" style="left:537.3px;top:298.6px;width:11.4px;height:11.2px;border-radius:3px;background:#f4f4f7"></div>
<svg style="left:539.5px;top:300.5px" width="6.5" height="7" viewBox="0 0 7 7"><circle cx="3.5" cy="1.9" r="1.6" fill="#6a6a72"/><path d="M0.6 6.8 Q0.6 4 3.5 4 Q6.4 4 6.4 6.8Z" fill="#6a6a72"/></svg>
<div class="t nm" style="left:553px;top:301.6px">Christine Arnold</div>
<div class="t tm" style="left:537.3px;top:319.1px">00:00:30</div>
<div class="t msg" style="left:537.3px;top:330.64px;">Yes, I have been a long customer, but I am just finding that I am no</div>
<div class="t msg" style="left:537.3px;top:340.44px;">longer using your application so I would like to cancel today.&nbsp; Can</div>
<div class="t msg" style="left:537.3px;top:350.14px;">you please help me process that?</div>

<!-- msg3 -->
<div class="a" style="left:537.3px;top:391.2px;width:11.6px;height:11px;border-radius:3px;background:#d6b8ee;overflow:hidden"><div class="a" style="left:1.6px;top:8.2px;width:8.6px;height:5px;border-radius:50%;background:#d0c8d6"></div><div class="a" style="left:3.2px;top:2.4px;width:5.6px;height:7px;border-radius:45%;background:#7a5040"></div><div class="a" style="left:2.8px;top:1.4px;width:6px;height:3.4px;border-radius:50% 50% 30% 30%;background:#2e1e1a"></div></div>
<div class="t nm" style="left:553px;top:393.7px">Anthony Rios</div>
<div class="t tm" style="left:537.3px;top:410.9px">00:00:45</div>
<div class="t msg" style="left:537.3px;top:423.54px;">Sure as a valued customer, I can offer you a 50%</div>
<div class="t msg" style="left:537.3px;top:433.24px;">discount if you wanted to keep your subscription</div>
<div class="t msg" style="left:537.3px;top:443.04px;">is that something you would be interested in</div>
<div class="t msg" style="left:537.3px;top:452.64px;">today?</div>
<div class="a" style="left:666px;top:437.2px;width:101px;height:12.2px;border-radius:4px;background:#fff;box-shadow:0 1px 4px rgba(0,0,0,0.14),0 0 0.5px rgba(0,0,0,0.2)"></div>
<div class="t" style="left:682.6px;top:440.2px;font-size:7.4px;color:#2b2b35;-webkit-text-stroke:0.15px #2b2b35">Jump to the latest</div>
<svg style="left:744.6px;top:439.5px" width="5" height="7" viewBox="0 0 5 7"><path d="M2.5 0.3 V6.2 M0.6 4.2 L2.5 6.2 L4.4 4.2" fill="none" stroke="#e0304a" stroke-width="0.75"/></svg>

<div class="a" style="left:527px;top:459.4px;width:250px;height:28.6px;background:#fff;border-bottom-right-radius:5px"></div>
<div class="a" style="left:527px;top:458.5px;width:250px;height:0.8px;background:#efeff2"></div>
<div class="box" style="left:622.8px;top:467px;width:11.4px;height:12.5px;border-color:#ebebef;border-radius:3px"></div>
<div class="box" style="left:639.2px;top:467px;width:11.4px;height:12.5px;border-color:#ebebef;border-radius:3px"></div>
<div class="box" style="left:655.8px;top:467px;width:11.4px;height:12.5px;border-color:#ebebef;border-radius:3px"></div>
<svg style="left:625px;top:470px" width="7" height="6.5" viewBox="0 0 7 6.5"><path d="M3.2 2.4 Q3.2 0.5 4.8 0.5 Q6.4 0.5 6.4 2.3 Q6.4 3.4 5.5 4 Q5 4.4 5 5.2 Q4.9 6 3.9 6" fill="none" stroke="#555" stroke-width="0.75"/><path d="M4.2 2.4 Q4.2 1.5 4.9 1.5 Q5.5 1.5 5.5 2.3" fill="none" stroke="#555" stroke-width="0.6"/><path d="M1.8 2 Q1.2 3 1.8 4 M0.8 1.4 Q-0.1 3 0.8 4.6" fill="none" stroke="#555" stroke-width="0.55"/></svg>
<svg style="left:641.8px;top:469.7px" width="7" height="7" viewBox="0 0 7 7"><path d="M1.6 0.5 Q2.8 0.6 2.6 1.8 M2.6 1.8 L4.8 5.6 H6.4 M2.9 2.6 Q1.5 4.5 0.7 6" fill="none" stroke="#555" stroke-width="0.8"/><path d="M5.2 4 L5.8 6.2" stroke="#555" stroke-width="0.6"/></svg>
<svg style="left:658.3px;top:469.8px" width="7" height="6.5" viewBox="0 0 7 6.5"><path d="M0.6 0.6 H5 Q6.4 0.6 6.4 2 V5.9 H1.8 Q0.6 5.9 0.6 4.6" fill="none" stroke="#555" stroke-width="0.8"/><path d="M1.2 4.6 L3.6 2.6 M1.2 4.6 L2.6 5.4 M3 4.8 L5.2 3" fill="none" stroke="#555" stroke-width="0.7"/></svg>


</body></html>
